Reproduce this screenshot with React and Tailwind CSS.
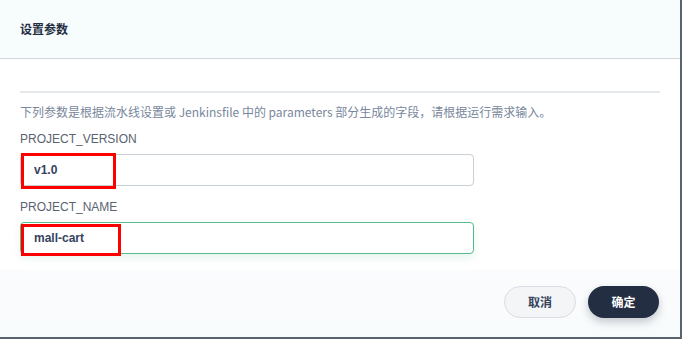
import React from "react";

export default function App() {
  const font = { fontFamily: '"Noto Sans CJK SC", "Noto Sans", sans-serif' };
  return (
    <div className="w-[682px] h-[339px] bg-[#5a6370] overflow-hidden" style={font}>
      <div className="w-[680px] h-[337px] bg-white flex flex-col">
        <div className="h-[59px] bg-[#f7fcfd] border-b border-[#d1d6da] flex items-center px-5">
          <span className="text-[12px] font-bold text-[#242e42] leading-none">设置参数</span>
        </div>
        <div className="flex-1 flex flex-col px-5">
          <div className="mt-[32px] h-[2px] bg-[#e6e9ec]"></div>
          <div className="mt-[11px] text-[12px] leading-[16px] text-[#79879c]">
            下列参数是根据流水线设置或 Jenkinsfile 中的 parameters 部分生成的字段，请根据运行需求输入。
          </div>
          <div className="mt-[12px] text-[12px] leading-[14px] text-[#5a6370]" style={{ fontFamily: '"Liberation Sans", Arial, sans-serif' }}>PROJECT_VERSION</div>
          <div className="relative mt-[8px] w-[454px] h-[32px] rounded-[4px] border border-[#c8cfd6] bg-white flex items-center pl-[13px]">
            <span className="text-[12px] font-bold text-[#36435c]" style={{ fontFamily: '"Liberation Sans", Arial, sans-serif' }}>v1.0</span>
            <div className="absolute left-0 top-[-2px] w-[95px] h-[36px] border-[3px] border-[#ff0000]"></div>
          </div>
          <div className="mt-[14px] text-[12px] leading-[14px] text-[#5a6370]" style={{ fontFamily: '"Liberation Sans", Arial, sans-serif' }}>PROJECT_NAME</div>
          <div className="relative mt-[8px] w-[454px] h-[32px] rounded-[4px] border border-[#55bc8a] bg-white flex items-center pl-[13px] shadow-[0_4px_8px_0_rgba(85,188,138,0.15)]">
            <span className="text-[12px] font-bold text-[#36435c]" style={{ fontFamily: '"Liberation Sans", Arial, sans-serif' }}>mall-cart</span>
            <div className="absolute left-0 top-[1px] w-[100px] h-[32px] border-[3px] border-[#ff0000]"></div>
          </div>
        </div>
        <div className="h-[68px] bg-gradient-to-b from-[#fbfcfd] to-[#f8fbfc] flex items-center justify-end gap-3 pr-[21px] pb-[2px]">
          <button className="w-[72px] h-[32px] rounded-full bg-[#f3f5f7] border border-[#d8dee5] text-[12px] font-bold text-[#36435c]">取消</button>
          <button className="w-[71px] h-[32px] rounded-full bg-[#242e42] text-[12px] font-bold text-white shadow-[0_4px_8px_0_rgba(36,46,66,0.25)]">确定</button>
        </div>
      </div>
    </div>
  );
}
